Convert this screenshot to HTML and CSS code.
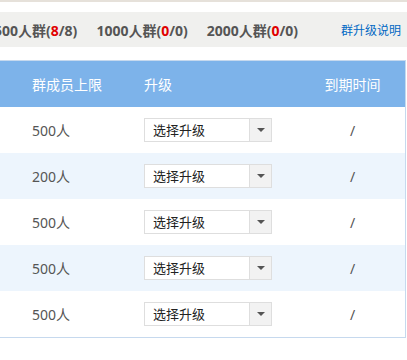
FILE: index.html
```html
<!DOCTYPE html>
<html lang="zh-CN">
<head>
  <meta charset="UTF-8">
  <title>群升级</title>
  <link rel="stylesheet" href="styles.css">
</head>
<body>
<div class="topline"></div>

<div class="quota-bar">
  <div class="quota-list">
    <span class="quota">500人群(<em>8</em>/8)</span>
    <span class="quota">1000人群(<em>0</em>/0)</span>
    <span class="quota">2000人群(<em>0</em>/0)</span>
  </div>
  <a class="help-link" href="#">群升级说明</a>
</div>

<table class="group-table">
  <colgroup>
    <col class="c-limit">
    <col class="c-upgrade">
    <col class="c-expire">
  </colgroup>
  <tr>
    <th>群成员上限</th>
    <th>升级</th>
    <th class="center">到期时间</th>
  </tr>
  <tr>
    <td>500人</td>
    <td><div class="select"><span class="select-text">选择升级</span><span class="select-btn"><i class="caret"></i></span></div></td>
    <td class="center">/</td>
  </tr>
  <tr class="alt">
    <td>200人</td>
    <td><div class="select"><span class="select-text">选择升级</span><span class="select-btn"><i class="caret"></i></span></div></td>
    <td class="center">/</td>
  </tr>
  <tr>
    <td>500人</td>
    <td><div class="select"><span class="select-text">选择升级</span><span class="select-btn"><i class="caret"></i></span></div></td>
    <td class="center">/</td>
  </tr>
  <tr class="alt">
    <td>500人</td>
    <td><div class="select"><span class="select-text">选择升级</span><span class="select-btn"><i class="caret"></i></span></div></td>
    <td class="center">/</td>
  </tr>
  <tr>
    <td>500人</td>
    <td><div class="select"><span class="select-text">选择升级</span><span class="select-btn"><i class="caret"></i></span></div></td>
    <td class="center">/</td>
  </tr>
</table>
</body>
</html>
```

FILE: styles.css
```css
body {
  margin: 0;
  background: #fff;
  font-family: "Noto Sans", "Noto Sans CJK SC", sans-serif;
  color: #555;
  width: 407px;
  overflow: hidden;
}

.topline {
  height: 2px;
  background: #e6e1da;
}

.quota-bar {
  margin-top: 10px;
  height: 35px;
  background: #f0f0ee;
  display: flex;
  align-items: center;
  justify-content: space-between;
  padding-right: 6px;
}

.quota-list {
  display: flex;
  gap: 19px;
  margin-left: -6px;
}

.quota {
  font-size: 14px;
  font-weight: bold;
  color: #555;
}

.quota em {
  font-style: normal;
  color: #e00000;
}

.help-link {
  font-size: 12px;
  color: #0068c4;
  text-decoration: none;
}

.group-table {
  margin-top: 13px;
  width: 406px;
  border-collapse: collapse;
  table-layout: fixed;
  border: 1px solid #c6d9ee;
  border-left: none;
}

.c-limit { width: 112px; }
.c-upgrade { width: 188px; }

th {
  height: 46px;
  padding: 0 0 0 32px;
  background: #7db3ea;
  color: #fff;
  font-size: 14px;
  font-weight: normal;
  text-align: left;
}

td {
  height: 46px;
  padding: 0 0 0 32px;
  font-size: 14px;
  color: #555;
}

th.center, td.center {
  padding: 0;
  text-align: center;
}

tr.alt td {
  background: #edf5fd;
}

.select {
  display: flex;
  width: 128px;
  height: 24px;
  box-sizing: border-box;
  border: 1px solid #dedede;
  background: #fff;
}

.select-text {
  flex: 1;
  padding-left: 8px;
  font-size: 13px;
  line-height: 22px;
  color: #222;
}

.select-btn {
  width: 21px;
  border-left: 1px solid #dedede;
  background: #f2f2f2;
  display: flex;
  align-items: center;
  justify-content: center;
}

.caret {
  width: 0;
  height: 0;
  border-left: 4px solid transparent;
  border-right: 4px solid transparent;
  border-top: 4px solid #555;
}
```
